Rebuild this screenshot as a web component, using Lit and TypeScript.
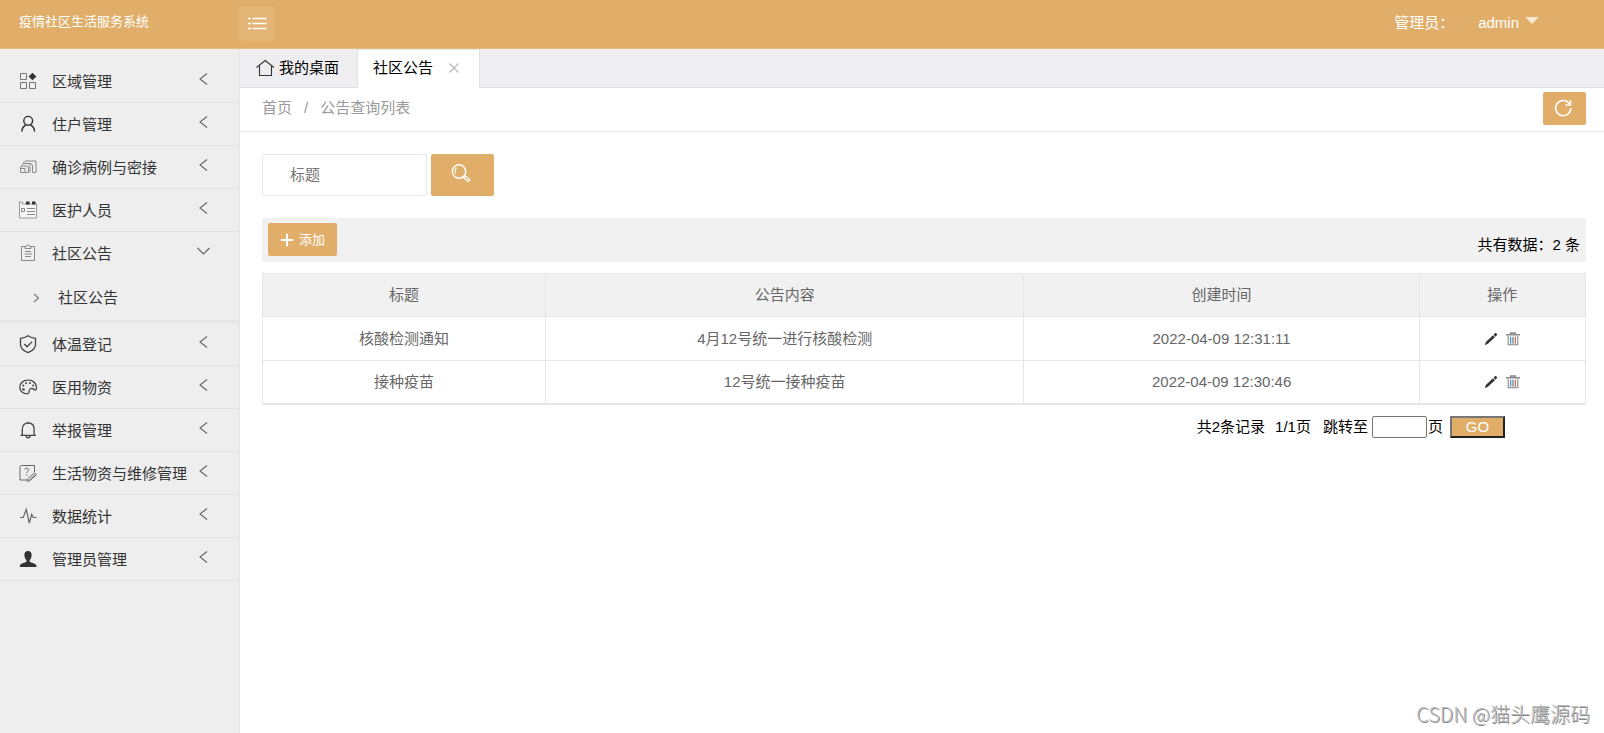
import { LitElement, html, css, svg, nothing } from "lit";
import { customElement, state } from "lit/decorators.js";
import { classMap } from "lit/directives/class-map.js";

interface MenuEntry {
  label: string;
  icon: string;
  children?: string[];
}

interface Notice {
  title: string;
  content: string;
  created: string;
}

const MENU: MenuEntry[] = [
  { label: "区域管理", icon: "blocks" },
  { label: "住户管理", icon: "person" },
  { label: "确诊病例与密接", icon: "cards" },
  { label: "医护人员", icon: "calendar" },
  { label: "社区公告", icon: "clipboard", children: ["社区公告"] },
  { label: "体温登记", icon: "shield" },
  { label: "医用物资", icon: "palette" },
  { label: "举报管理", icon: "bell" },
  { label: "生活物资与维修管理", icon: "question" },
  { label: "数据统计", icon: "pulse" },
  { label: "管理员管理", icon: "user" },
];

const NOTICES: Notice[] = [
  { title: "核酸检测通知", content: "4月12号统一进行核酸检测", created: "2022-04-09 12:31:11" },
  { title: "接种疫苗", content: "12号统一接种疫苗", created: "2022-04-09 12:30:46" },
];

const SHAPES: Record<string, unknown> = {
  blocks: svg`
    <g fill="none" stroke="#777"><path d="M1.5 1.5h6v6h-6zM1.5 10.5h6v6h-6zM10.5 10.5h6v6h-6z"/></g>
    <path d="M13.5 0.8 17.4 4.5 13.5 8.2 9.6 4.5z" fill="#333"/>`,
  person: svg`
    <g fill="none" stroke="#333" stroke-width="1.4"><circle cx="9.2" cy="5.8" r="4.4"/>
    <path d="M2.8 16.6c.2-3.2 1.7-5.4 4.1-6.6M15.6 16.6c-.2-3.2-1.7-5.4-4.1-6.6"/></g>`,
  cards: svg`
    <g fill="none" stroke="#888"><path d="M4.500 6V4.500l2-1.500h10.500V14.500h-3M2.500 7.500l2-2h7l2 1.500v7.500M11 5.500v9M1.500 14.500V9l1.500-1h5l1.500 1v5.500zM2 10.500h4v4"/></g>`,
  calendar: svg`
    <path d="M.5 1h3v2h14v14H.5z" fill="#f5f5f5" stroke="#999"/>
    <path d="M7 .500h3.500v3H7zM13 .500h3.500v3H13z" fill="#333"/>
    <path d="M2.500 7.500h3v3h-3zM8 7.500h8M8 10.500h8M8 13.500h8" fill="none" stroke="#888"/>`,
  clipboard: svg`
    <path d="M6 2.500H2.500v14h13v-14H12M6 4.500h6v-2h-1.500a1.500 1.500 0 0 0-3 0H6zM6 7.500h6M5.500 10h7.500M6 12.500h6" fill="none" stroke="#888"/>`,
  shield: svg`
    <path d="M9 .8C6.800 2.500 4 3.200 1.500 3.400v6.200c0 4 3.600 6.600 7.500 8 3.900-1.400 7.500-4 7.500-8V3.400C14 3.200 11.200 2.500 9 .8zM5.300 9l2.800 2.800 5-5.200" fill="none" stroke="#444" stroke-width="1.300"/>`,
  palette: svg`
    <path d="M8.500 16C4 15.500.8 13 .8 9.200.8 5 4.500 2 9.200 2c5 0 8.300 3.400 8.300 7.600 0 2.700-1.300 2.900-2.700 1.600-2.200-1.800-4.300-.6-4.500 1.300-.1 1.900-.7 3.100-1.800 3.500z" fill="none" stroke="#333" stroke-width="1.200"/>
    <g fill="#444"><circle cx="4.500" cy="11.500" r="1.300"/><circle cx="4.300" cy="7.600" r="1"/><circle cx="7.200" cy="5.200" r="1"/><circle cx="11" cy="4.900" r="1"/><circle cx="14.200" cy="7.400" r="1"/></g>`,
  bell: svg`
    <path d="M1.500 14.400H17M3.300 14.300V8.200c0-3.800 2.300-6.200 5.900-6.200s5.900 2.400 5.900 6.200v6.100M7.300 14.800c0 2.700 3.800 2.700 3.800 0M9.200 2V.7" fill="none" stroke="#444" stroke-width="1.300"/>`,
  question: svg`
    <path d="M15.500 8V1.500H2.500l-1.500 1v13.500h7M6 5.800c0-2.300 3.600-2.300 3.600 0 0 1.600-1.800 1.500-1.800 3.400M7.800 10.600v1.400M9 14.500 15.500 8.800l1.800 2-6.500 6-2.300.5zM10.500 16l5.500-5.500" fill="none" stroke="#666"/>`,
  pulse: svg`
    <path d="M1 10.500h3.200L7.300 2.500l3 13.500 2.400-8.500 1.500 3H17.500" fill="none" stroke="#666" stroke-width="1.200"/>`,
  user: svg`
    <path d="M9 1c2.500 0 3.800 1.700 3.600 4.300-.1 2.200-.9 3.900-1.900 4.800v1.600c1.800.9 4.800 1.500 6.200 2.900.5.600.6 1.500.6 2.400H.8c0-.9.100-1.800.6-2.400 1.400-1.400 4.200-2 6-2.900v-1.600c-1.100-.9-1.900-2.600-2-4.800C5.200 2.700 6.500 1 9 1z" fill="#333"/>`,
  left: svg`<path d="M12 3.500 5 9l7 5.500" fill="none" stroke="#666" stroke-width="1.100"/>`,
  down: svg`<path d="M2.500 6l6 6 6-6" fill="none" stroke="#666" stroke-width="1.100"/>`,
  right: svg`<path d="M7 5l4.500 4L7 13" fill="none" stroke="#777" stroke-width="1.100"/>`,
  home: svg`<path d="M.5 8.500 9.200 1.500 18 8.500M3.500 7v9.500h12V7" fill="none" stroke="#333" stroke-width="1.100"/>`,
  close: svg`<path d="M4.500 4.500l9 9M13.500 4.500l-9 9" fill="none" stroke="#bbb" stroke-width="1.300"/>`,
  list: svg`<path d="M0 3.500h3M4.500 3.500h14M0 8.500h3M4.500 8.500h14M0 13.500h3M4.500 13.500h14" fill="none" stroke="#fff" stroke-width="1.300"/>`,
  search: svg`<g fill="none" stroke="#fff"><circle cx="7" cy="7.500" r="6.700" stroke-width="1.400"/><path d="M3.700 9.500a4 4 0 0 1 1-5.500M11.600 13.400l1.600-1.600 4.600 4.200-1.700 1.700z" stroke-width="1.300"/></g>`,
  refresh: svg`<path d="M15.600 5A7.600 7.600 0 1 0 16.800 9M16.500 1v5H11.500" fill="none" stroke="#fff" stroke-width="1.500"/>`,
  plus: svg`<path d="M9 1v16M1 9h16" fill="none" stroke="#fff" stroke-width="2.800"/>`,
  pencil: svg`<path d="M1 17l1.400-4.300L11.500 4.200l2.500 2.600-9 8.400zM12.300 3.400l2-2c.9-.7 3.300 1.400 2.400 2.500l-1.900 2.100z" fill="#333"/>`,
  trash: svg`<path d="M0 3.500h18M6 3V1.300h6V3" fill="none" stroke="#888" stroke-width="2"/><path d="M2.800 5v11.300h12.400V5" fill="none" stroke="#888" stroke-width="1.400"/><path d="M6 6v9" stroke="#3f93d6" stroke-width="1.600"/><path d="M9 6v9" stroke="#556" stroke-width="1.300"/><path d="M12 6v9" stroke="#b4604a" stroke-width="1.400"/>`,
};

const icon = (name: string, size = 18) =>
  html`<svg class="icon" width=${size} height=${size} viewBox="0 0 18 18" aria-hidden="true">${SHAPES[name]}</svg>`;

@customElement("app-root")
export class AppRoot extends LitElement {
  @state() private opened = "社区公告";

  static styles = css`
    :host {
      display: flex;
      flex-direction: column;
      min-height: 100vh;
      position: relative;
      background: #fff;
      color: #000;
      font: 15px/22px "Liberation Sans", "Noto Sans CJK SC", sans-serif;
    }
    *, *::before, *::after { box-sizing: border-box; }
    button, input { font: inherit; color: inherit; margin: 0; }
    button { border: 0; padding: 0; background: none; cursor: pointer; }
    a { color: inherit; text-decoration: none; }
    .icon { display: block; flex: none; overflow: visible; }

    .top {
      display: flex;
      height: 49px;
      flex: none;
      background: #e0ae69;
      border-bottom: 1px solid #e6bb80;
      color: #fff;
    }
    .brand { width: 239px; padding-left: 19px; font-size: 13px; line-height: 44px; }
    .toggle {
      display: grid;
      place-items: center;
      width: 35px;
      height: 35px;
      margin-top: 6px;
      border-radius: 3px;
      background: rgba(255, 255, 255, 0.1);
    }
    .account {
      display: flex;
      margin-left: auto;
      padding-right: 65px;
      gap: 24px;
      line-height: 45px;
    }
    .user { display: flex; gap: 6px; line-height: 45px; }
    .caret {
      margin-top: 17px;
      border: 7px solid transparent;
      border-top-color: rgba(255, 255, 255, 0.7);
      border-bottom: 0;
    }

    .body { display: flex; flex: 1; }
    .side {
      flex: none;
      width: 240px;
      padding-top: 11px;
      background: #eee;
      border-right: 1px solid #e5e5e5;
      color: #333;
    }
    .list { list-style: none; margin: 0; padding: 0; }
    .item { border-bottom: 1px solid #e2e2e2; }
    .entry {
      display: flex;
      align-items: center;
      width: 100%;
      height: 42px;
      padding: 0 26px 0 19px;
      text-align: left;
      white-space: nowrap;
    }
    .label { flex: 1; padding: 2px 0 0 15px; }
    .arrow { padding-bottom: 5px; }
    .sub { margin-bottom: 1px; border-bottom: 1px solid #e2e2e2; }
    .child { display: flex; align-items: center; height: 46px; padding: 2px 0 0 27px; gap: 13px; }

    .main { flex: 1; min-width: 0; }
    .tabs { display: flex; height: 39px; background: #eeeef0; border-bottom: 1px solid #e2e2e2; }
    .tab { display: flex; align-items: center; gap: 5px; height: 38px; padding: 0 18px 0 16px; white-space: nowrap; }
    .active {
      height: 39px;
      gap: 12px;
      padding: 0 16px 2px 15px;
      background: #fff;
      border: 1px solid #e2e2e2;
      border-bottom: 0;
    }
    .crumbs {
      display: flex;
      align-items: center;
      height: 44px;
      padding: 0 18px 3px 22px;
      gap: 12px;
      border-bottom: 1px solid #e5e5e5;
      color: #999;
    }
    .solid { display: grid; place-items: center; background: #e0ae69; color: #fff; border-radius: 2px; }
    .refresh { width: 43px; height: 33px; margin-left: auto; padding-right: 4px; }
    .page { padding: 22px 18px 0 22px; }
    .search { display: flex; gap: 4px; }
    .field { width: 165px; height: 42px; padding: 0 0 2px 27px; border: 1px solid #e6e6e6; border-radius: 2px; background: #fff; }
    .field::placeholder { color: #757575; opacity: 1; }
    .find { width: 63px; height: 42px; padding: 0 4px 4px 0; }
    .bar {
      display: flex;
      justify-content: space-between;
      align-items: flex-start;
      height: 44px;
      margin-top: 22px;
      padding: 5px 6px;
      border-radius: 2px;
      background: #f1f1f1;
    }
    .add { display: flex; align-items: center; justify-content: center; gap: 5px; width: 69px; height: 33px; font-size: 13px; }
    .total { padding-top: 11px; }

    .grid {
      width: 100%;
      margin-top: 11px;
      table-layout: fixed;
      border-collapse: separate;
      border-spacing: 0;
      border: 1px solid #e6e6e6;
      color: #666;
      text-align: center;
    }
    .grid th, .grid td {
      height: 44px;
      padding: 0;
      font-weight: 400;
      border-right: 1px solid #e6e6e6;
      border-bottom: 1px solid #e6e6e6;
    }
    .grid th { height: 43px; background: #f1f1f1; }
    .grid tr:last-child td { height: 43px; }
    .grid th:last-child, .grid td:last-child { border-right: 0; }
    .wtitle { width: 21.4%; }
    .wcontent { width: 36.2%; }
    .wtime { width: 29.9%; }
    .actions { display: flex; justify-content: center; gap: 8px; }

    .pager { display: flex; justify-content: flex-end; margin-top: 11px; padding-right: 81px; }
    .records { margin-right: 10px; }
    .pages { margin-right: 12px; }
    .jump { margin-right: 4px; }
    .number { width: 55px; height: 22px; padding: 0 4px; border: 1px solid #767676; border-radius: 2px; background: #fff; margin-right: 1px; }
    .go {
      width: 55px;
      height: 22px;
      margin-left: 7px;
      border: 2px solid;
      border-color: #767676 #212121 #212121 #767676;
      background: #e0ae69;
      color: #fff;
      line-height: 18px;
    }
    .mark {
      position: absolute;
      right: 14px;
      bottom: 6px;
      color: #bbb;
      font: 20px/26px "Noto Sans CJK SC", sans-serif;
      font-weight: 300;
      text-shadow: 1px 1px 0 #888;
    }
  `;

  private toggle(label: string) {
    this.opened = this.opened === label ? "" : label;
  }

  private renderEntry(entry: MenuEntry) {
    const open = !!entry.children && this.opened === entry.label;
    return html`<li class="item">
      <button class="entry" aria-expanded=${open} @click=${() => this.toggle(entry.label)}>
        ${icon(entry.icon)}<span class="label">${entry.label}</span>
        <span class="arrow">${icon(open ? "down" : "left")}</span>
      </button>
      ${open
        ? html`<ul class="list sub">
            ${entry.children!.map((c) => html`<li><a class="child" href="#">${icon("right")}${c}</a></li>`)}
          </ul>`
        : nothing}
    </li>`;
  }

  private renderTab(label: string, active: boolean) {
    return html`<div class=${classMap({ tab: true, active })}>
      ${active ? nothing : icon("home")}<a href="#">${label}</a>
      ${active ? html`<button aria-label="关闭">${icon("close")}</button>` : nothing}
    </div>`;
  }

  render() {
    return html`
      <header class="top">
        <div class="brand">疫情社区生活服务系统</div>
        <button class="toggle" aria-label="菜单">${icon("list")}</button>
        <div class="account">
          <span>管理员：</span>
          <button class="user">admin<span class="caret"></span></button>
        </div>
      </header>
      <div class="body">
        <nav class="side"><ul class="list">${MENU.map((e) => this.renderEntry(e))}</ul></nav>
        <main class="main">
          <div class="tabs">${this.renderTab("我的桌面", false)}${this.renderTab("社区公告", true)}</div>
          <div class="crumbs">
            <a href="#">首页</a><span>/</span><a href="#">公告查询列表</a>
            <button class="solid refresh" aria-label="刷新">${icon("refresh")}</button>
          </div>
          <div class="page">
            <form class="search" @submit=${(e: Event) => e.preventDefault()}>
              <input class="field" type="text" placeholder="标题" aria-label="标题" />
              <button class="solid find" aria-label="搜索">${icon("search")}</button>
            </form>
            <div class="bar">
              <button class="solid add">${icon("plus", 14)}添加</button>
              <span class="total">共有数据：2 条</span>
            </div>
            <table class="grid">
              <thead>
                <tr>
                  <th class="wtitle">标题</th><th class="wcontent">公告内容</th>
                  <th class="wtime">创建时间</th><th>操作</th>
                </tr>
              </thead>
              <tbody>
                ${NOTICES.map(
                  (n) => html`<tr>
                    <td>${n.title}</td><td>${n.content}</td><td>${n.created}</td>
                    <td><div class="actions">
                      <button aria-label="编辑">${icon("pencil", 14)}</button>
                      <button aria-label="删除">${icon("trash", 14)}</button>
                    </div></td>
                  </tr>`
                )}
              </tbody>
            </table>
            <div class="pager">
              <span class="records">共2条记录</span><span class="pages">1/1页</span>
              <label class="jump" for="page">跳转至</label>
              <input class="number" id="page" type="text" /><span>页</span>
              <button class="go">GO</button>
            </div>
          </div>
        </main>
      </div>
      <div class="mark">CSDN @猫头鹰源码</div>
    `;
  }
}
